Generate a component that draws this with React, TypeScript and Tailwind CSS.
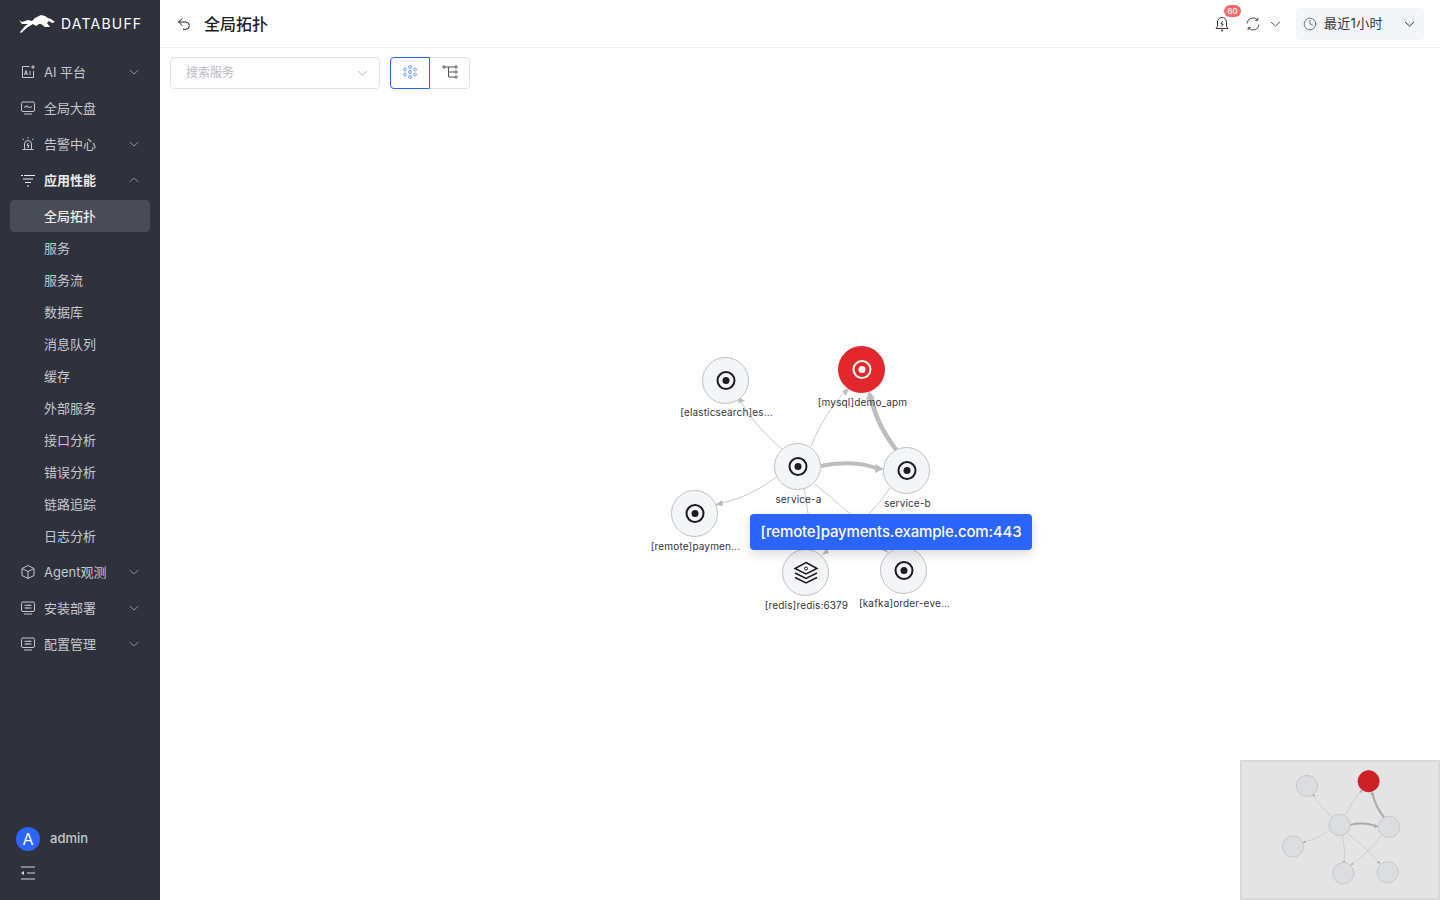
import { Clock, Undo2 } from "lucide-react";

type NavItem = { label: string; icon: string; chevron?: "down" | "up"; bold?: boolean };

const font = "font-['Inter','Noto_Sans_CJK_SC',sans-serif]";

function Chevron({ up, w = 10, className }: { up?: boolean; w?: number; className?: string }) {
  return (
    <svg width={w} height="6" viewBox="0 0 10 6" fill="none" stroke="currentColor" strokeWidth="1" className={className}>
      <path d={up ? "M0.5 5L5 1l4.5 4" : "M0.5 1L5 5l4.5-4"} />
    </svg>
  );
}

function NavIcon({ name }: { name: string }) {
  const common = {
    width: 16,
    height: 16,
    viewBox: "0 0 16 16",
    fill: "none",
    stroke: "currentColor",
    strokeWidth: 1,
  };
  if (name === "ai")
    return (
      <svg {...common}>
        <path d="M9.5 2.5H2.5v11h11V7" />
        <path d="M4.5 11l1.5-4.5L7.5 11M5 9.6h2M10 7v4" />
        <path d="M13 1v4M11 3h4" />
      </svg>
    );
  if (name === "dash")
    return (
      <svg {...common}>
        <rect x="1.5" y="2" width="13" height="9.5" rx="1.5" />
        <path d="M4 7h2l1-1.5L8.5 8 9.5 7H12M4 14h8" />
      </svg>
    );
  if (name === "alert")
    return (
      <svg {...common}>
        <path d="M4.5 13V8a3.5 3.5 0 0 1 7 0v5M2.5 13.5h11M8 1v1.5M2.5 2.5l1.5 1.5M13.5 2.5L12 4" />
        <path d="M8.4 7L7 9.5h2L7.6 12" />
      </svg>
    );
  if (name === "perf")
    return (
      <svg {...common}>
        <path d="M1 3.5h2M4 3.5h11M3 7h10M5 10.5h6M7 14h2" />
      </svg>
    );
  if (name === "agent")
    return (
      <svg {...common}>
        <path d="M8 1.5l6 3v7l-6 3-6-3v-7zM2 4.5l6 3 6-3M8 7.5v7" />
      </svg>
    );
  return (
    <svg {...common}>
      <rect x="1.5" y="2" width="13" height="9.5" rx="1.5" />
      <path d="M4.5 5.3h7M4.5 8h7M4 14h8" />
      <path d="M9 4.5v1.6M7 7.2v1.6" />
    </svg>
  );
}

function TopItem({ label, icon, chevron, bold }: NavItem) {
  return (
    <div className={`flex h-9 items-center pl-5 pr-[21px] ${bold ? "text-[#e8e9ec]" : "text-[#c6c8ce]"}`}>
      <NavIcon name={icon} />
      <span className={`ml-2 flex-1 pt-px text-[13px] ${bold ? "font-semibold" : ""}`}>{label}</span>
      {chevron && <Chevron up={chevron === "up"} className="text-[#8b8e98]" />}
    </div>
  );
}

const subItems = ["服务", "服务流", "数据库", "消息队列", "缓存", "外部服务", "接口分析", "错误分析", "链路追踪", "日志分析"];

function Sidebar() {
  return (
    <aside className="flex h-full w-40 shrink-0 flex-col bg-[#2f323c]">
      <div className="flex h-[54px] items-start pl-[19px] pt-[15px]">
        <svg width="36" height="18" viewBox="0 0 36 18">
          <path
            fill="#fff"
            d="M0 5l3 2 6-2 4 1 3-3 4-2 2-1 4 1 3 2 3 1 4 3-3 1-3-2-2 2 3 4-5 0-4-3-2 0-3 2-3-2-5 3-7 6-1-1 5-6 3-2-6 0z"
          />
        </svg>
        <span className="ml-[6px] text-[14px] font-normal leading-[18px] tracking-[1.2px] text-white">DATABUFF</span>
      </div>
      <TopItem label="AI 平台" icon="ai" chevron="down" />
      <TopItem label="全局大盘" icon="dash" />
      <TopItem label="告警中心" icon="alert" chevron="down" />
      <TopItem label="应用性能" icon="perf" chevron="up" bold />
      <div className="my-[2px]">
        <div className="mx-[10px] flex h-8 items-center rounded bg-[#4a4c55] pl-[34px] pt-px text-[13px] font-medium text-[#e8e9ec]">全局拓扑</div>
        {subItems.map((s) => (
          <div key={s} className="flex h-8 items-center pl-11 pt-px text-[13px] text-[#c6c8ce]">
            {s}
          </div>
        ))}
      </div>
      <TopItem label="Agent观测" icon="agent" chevron="down" />
      <TopItem label="安装部署" icon="config" chevron="down" />
      <TopItem label="配置管理" icon="config" chevron="down" />
      <div className="mt-auto flex items-center pb-[15px] pl-4">
        <div className="flex h-6 w-6 items-center justify-center rounded-full bg-[#2b64fb] text-[16px] text-white">A</div>
        <span className="ml-[10px] text-[13px] font-medium text-[#c6c8ce]">admin</span>
      </div>
      <div className="pb-[20px] pl-5 text-[#d5d6da]">
        <svg width="16" height="14" viewBox="0 0 16 14" fill="none" stroke="currentColor" strokeWidth="1.2" className="block">
          <path d="M1 1h14M7 7h8M1 13h14" />
          <path d="M4 5v4L1 7z" fill="currentColor" stroke="none" />
        </svg>
      </div>
    </aside>
  );
}

function Header() {
  return (
    <header className="flex h-12 shrink-0 items-center border-b border-[#eeeff1] pl-4 pr-4">
      <Undo2 size={16} strokeWidth={1.5} className="text-[#1d1f25]" />
      <h1 className="ml-3 text-[16px] font-medium text-[#1d1f25]">全局拓扑</h1>
      <div className="ml-auto flex items-center">
        <div className="relative mr-[17px] text-[#3a3c44]">
          <svg width="14" height="16" viewBox="0 0 14 16" fill="none" stroke="currentColor" strokeWidth="1" className="block">
            <path d="M1 12.5h12l-1.5-2V6a4.5 4.5 0 0 0-9 0v4.5z" />
            <path d="M6 14.5h2" strokeWidth="1.4" />
            <path d="M7.6 5L6 8h2.2L6.6 10.5" />
          </svg>
          <span className="absolute -right-[12px] -top-[11px] flex h-[12px] w-[17px] items-center justify-center rounded-full bg-[#f76a6a] text-[8px] font-medium leading-none text-white">60</span>
        </div>
        <svg width="14" height="14" viewBox="0 0 14 14" fill="none" stroke="#4a4c55" strokeWidth="1" className="mr-[10px] block">
          <path d="M1 6.5A6 6 0 0 1 11.5 3M13 7.5A6 6 0 0 1 2.5 11" />
          <path d="M11.8 .8v2.6H9.2M2.2 13.2v-2.6h2.6" />
        </svg>
        <Chevron w={11} className="mr-[15px] text-[#55575f]" />
        <div className="flex h-8 w-[128px] items-center rounded bg-[#f4f5f7] pl-[7px] pr-[9px] text-[#33353c]">
          <Clock size={14} strokeWidth={1.1} />
          <span className="ml-[7px] flex-1 pt-px text-[13px] tracking-[0.3px]">最近1小时</span>
          <Chevron w={11} />
        </div>
      </div>
    </header>
  );
}

function Toolbar() {
  return (
    <div className="flex items-center pl-[10px] pt-[9px]">
      <div className="flex h-8 w-[210px] items-center justify-between rounded border border-[#e1e3e7] pl-[15px] pr-[11px]">
        <span className="text-[12px] text-[#b8bac0]">搜索服务</span>
        <Chevron w={11} className="text-[#b8bac0]" />
      </div>
      <div className="ml-[10px] flex h-8 items-center justify-center">
        <div className="flex h-8 w-10 items-center justify-center rounded-l border border-[#2b64fb] pb-[2px] text-[#6f95f8]">
          <svg width="14" height="14" viewBox="0 0 14 14" fill="none" stroke="currentColor" strokeWidth="1">
            <circle cx="7" cy="2" r="1.4" />
            <circle cx="7" cy="12" r="1.4" />
            <circle cx="2" cy="4.5" r="1.4" />
            <circle cx="12" cy="4.5" r="1.4" />
            <circle cx="2" cy="9.5" r="1.4" />
            <circle cx="12" cy="9.5" r="1.4" />
            <circle cx="7" cy="7" r="1.4" />
          </svg>
        </div>
        <div className="flex h-8 w-10 items-center justify-center rounded-r border border-l-0 border-[#e1e3e7] pb-[2px] text-[#55575f]">
          <svg width="16" height="14" viewBox="0 0 16 14" fill="none" stroke="currentColor" strokeWidth="1">
            <circle cx="2" cy="2" r="1.2" />
            <circle cx="14" cy="2" r="1.2" />
            <circle cx="14" cy="7" r="1.2" />
            <circle cx="14" cy="12" r="1.2" />
            <path d="M3.2 2h9.6M6.5 2v10h6.3M6.5 7h6.3" />
          </svg>
        </div>
      </div>
    </div>
  );
}

const NODES = [
  { id: "es", x: 726, y: 380, label: "[elasticsearch]es...", ly: 412 },
  { id: "mysql", x: 862, y: 369.5, label: "[mysql]demo_apm", ly: 402, alert: true },
  { id: "a", x: 798, y: 466, label: "service-a", ly: 499 },
  { id: "b", x: 907, y: 470.5, label: "service-b", ly: 503 },
  { id: "remote", x: 695, y: 513.5, label: "[remote]paymen...", ly: 546 },
  { id: "redis", x: 806, y: 572.5, label: "[redis]redis:6379", ly: 605, stack: true },
  { id: "kafka", x: 904, y: 570.5, label: "[kafka]order-eve...", ly: 603 },
];

const EDGES = [
  { d: "M782 449 C765 435 752 420 741 402", head: "739,397 745,401 738,403" },
  { d: "M811 446 C820 425 830 407 844 393", head: "849,388 846,396 842,391" },
  { d: "M821 466 C838 462 860 462 876 468", w: 4, head: "884,469 875,464 875,473" },
  { d: "M897 451 C885 435 876 420 871 398", w: 4.5, head: "869,391 866,400 875,398" },
  { d: "M776 477 C760 490 740 499 722 503", head: "715,505 722,500 723,506" },
  { d: "M804 489 C808 510 811 530 808 546", head: "807,552 804,546 811,546" },
  { d: "M815 484 C840 505 865 525 884 549", head: "888,553 880,549 885,545" },
  { d: "M890 488 C875 510 850 535 826 552", head: "822,555 826,549 829,553" },
];

// same drawing used for the big graph edges and the minimap
function EdgeLines({ color }: { color: string }) {
  return (
    <>
      {EDGES.map((e) => (
        <g key={e.d}>
          <path d={e.d} fill="none" stroke={color} strokeWidth={e.w ?? 0.8} />
          <polygon points={e.head} fill={color} />
        </g>
      ))}
    </>
  );
}

function GraphNode({ n }: { n: (typeof NODES)[number] }) {
  const top = Math.round(n.y - 23.5);
  return (
    <div className="absolute flex w-[119px] flex-col items-center" style={{ left: n.x - 160 - 60, top: top - 48 }}>
      <div
        className={`flex h-[47px] w-[47px] items-center justify-center rounded-full ${
          n.alert ? "bg-[#e2282c]" : "border border-[#c0c1c5] bg-[#f4f5f7]"
        }`}
      >
        {n.stack ? (
          <svg width="26" height="24" viewBox="0 0 26 24" fill="none" stroke="#1b1c20" strokeWidth="1.5">
            <path d="M13 1.5L24 7.5 13 13 2 7.5z" />
            <path d="M2 12l11 5.5L24 12M2 16.5L13 22l11-5.5" />
            <circle cx="13" cy="7.5" r="1.5" strokeWidth="1" />
          </svg>
        ) : (
          <div className={`flex h-[19px] w-[19px] translate-x-[0.5px] items-center justify-center rounded-full border-[2.5px] ${n.alert ? "border-white" : "border-[#1b1c20]"}`}>
            <div className={`h-[7px] w-[7px] rounded-full ${n.alert ? "bg-white" : "bg-[#1b1c20]"}`} />
          </div>
        )}
      </div>
      <span className="absolute translate-x-px whitespace-nowrap text-[10px] leading-[12px] tracking-[0.15px] text-[#33353c]" style={{ top: n.ly - top - 6 }}>
        {n.label}
      </span>
    </div>
  );
}

function Minimap() {
  // page coords -> minimap coords, scale taken from the node spacing
  const k = 0.453;
  return (
    <div className="absolute bottom-0 right-0 h-[140px] w-[200px] border-2 border-[#d9d9d9] bg-[#e4e4e4]">
      <svg width="196" height="136" viewBox="0 0 196 136">
        <g transform={`translate(${1307 - 1242 - 726 * k} ${786 - 762 - 380 * k}) scale(${k})`}>
          <EdgeLines color="#a9aaad" />
          {NODES.map((n) => (
            <circle
              key={n.id}
              cx={n.x}
              cy={n.y}
              r="23.5"
              fill={n.alert ? "#cc2225" : "#dcddde"}
              stroke={n.alert ? "#cc2225" : "#bcbdc0"}
              strokeWidth="1.5"
            />
          ))}
        </g>
      </svg>
    </div>
  );
}

export default function App() {
  return (
    <div className={`flex h-[900px] w-[1440px] overflow-hidden bg-white ${font}`}>
      <Sidebar />
      <main className="flex min-w-0 flex-1 flex-col">
        <Header />
        <Toolbar />
        <div className="relative flex-1">
          <div className="absolute left-0 top-[-41px] h-[852px] w-[1280px]">
            <svg width="1280" height="852" viewBox="160 48 1280 852" className="absolute left-0 top-0">
              <EdgeLines color="#bcbdc0" />
            </svg>
            {NODES.map((n) => (
              <GraphNode key={n.id} n={n} />
            ))}
            <div className="absolute left-[590px] top-[466px] flex h-9 w-[282px] items-center justify-center rounded bg-[#2b64fb] text-[15px] font-medium tracking-[-0.17px] text-white shadow-[0_4px_12px_rgba(0,0,0,0.15)]">
              [remote]payments.example.com:443
            </div>
          </div>
          <Minimap />
        </div>
      </main>
    </div>
  );
}
